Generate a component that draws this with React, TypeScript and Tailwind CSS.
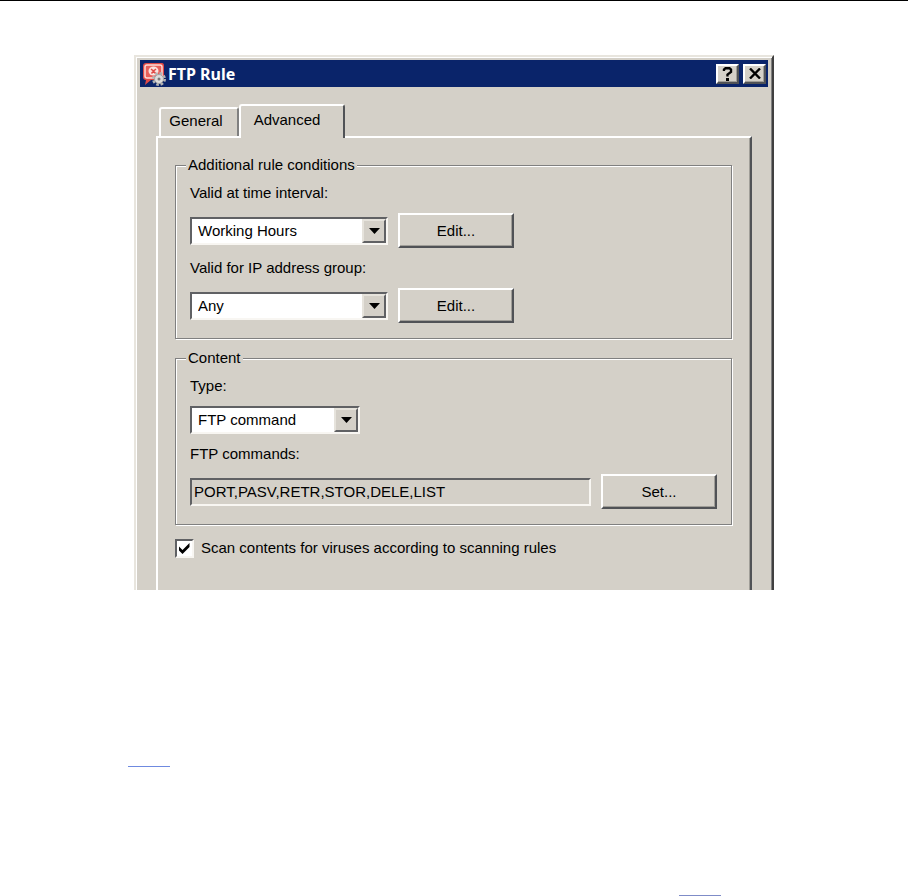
import type { ReactNode } from "react";

const raised =
  "border-2 border-t-white border-l-white border-r-[#505256] border-b-[#505256] shadow-[inset_-1px_-1px_0_#a09e98]";
const sunken =
  "border-2 border-t-[#606164] border-l-[#606164] border-r-[#f8f6f2] border-b-[#f8f6f2]";

function RuleIcon() {
  return (
    <svg width="24" height="24" viewBox="0 0 24 24" aria-hidden="true">
      <path d="M4 1h16q2 0 2 3v11q0 3-3 3H9l-6 5 1-5q-3 0-3-3V4q0-3 3-3z" fill="#e04a46" />
      <rect x="3" y="3" width="17" height="13" rx="2" fill="#e8605a" stroke="#fbdcd8" strokeWidth="1.500" />
      <ellipse cx="11.500" cy="9" rx="5" ry="4.500" fill="#fbe3df" />
      <path d="M9 7l2.500 2L14 7M9.500 11.500L11.500 9l2 2.500" stroke="#e04a46" strokeWidth="1.500" fill="none" />
      <circle cx="17" cy="17" r="5" fill="none" stroke="#b4b4b4" strokeWidth="4" strokeDasharray="2.3 1.6" />
      <circle cx="17" cy="17" r="4.500" fill="#dcdcdc" stroke="#a4a4a4" />
      <circle cx="17" cy="17" r="1.500" fill="#777" />
    </svg>
  );
}

function TitleButton({ label, children }: { label: string; children: ReactNode }) {
  return (
    <button
      type="button"
      aria-label={label}
      className={`flex h-5 w-[23px] items-center justify-center bg-[#d4d0c8] text-black ${raised}`}
    >
      {children}
    </button>
  );
}

function PushButton({ children }: { children: ReactNode }) {
  return (
    <button type="button" className={`h-[35px] w-[116px] shrink-0 bg-[#d4d0c8] ${raised}`}>
      {children}
    </button>
  );
}

function Combo({ id, options, width }: { id: string; options: string[]; width: string }) {
  return (
    <div className={`relative h-7 bg-white ${width} ${sunken}`}>
      <select id={id} className="block h-full w-full appearance-none bg-transparent pr-6 pl-1.5 outline-none">
        {options.map((o) => (
          <option key={o}>{o}</option>
        ))}
      </select>
      {/* Drop-down arrow */}
      <span className="pointer-events-none absolute inset-y-0 right-0 flex w-6 items-center justify-center border-2 border-t-[#e6e3dc] border-r-[#606164] border-b-[#606164] border-l-[#e6e3dc] bg-[#d4d0c8]">
        <svg width="11" height="6" viewBox="0 0 11 6" aria-hidden="true">
          <path d="M0 0h11L5.500 6z" fill="#000" />
        </svg>
      </span>
    </div>
  );
}

function Group({ title, children }: { title: string; children: ReactNode }) {
  return (
    <fieldset className="min-w-0 border border-[#808080] px-[14px] pb-[15px] shadow-[1px_1px_0_#fff,inset_1px_1px_0_#fff]">
      <legend className="-ml-1 bg-[#d4d0c8] px-0.5">{title}</legend>
      <div className="flex flex-col gap-2.5 pt-2">{children}</div>
    </fieldset>
  );
}

export default function App() {
  return (
    <main className="border-t border-black bg-white pt-[54px] font-['Liberation_Sans',Arial,sans-serif] text-[15px] leading-5 text-black">
      <section className="mx-auto w-full max-w-[640px] border-2 border-b-0 border-t-[#e8e5de] border-l-[#e8e5de] border-r-[#404040] bg-[#d4d0c8] shadow-[inset_1px_1px_0_#fff,inset_-1px_0_0_#808080]">
        <div className="px-1 pt-[3px]">
          <header className="flex h-[27px] items-center gap-0.5 bg-[#0a246a] px-0.5 text-white">
            <RuleIcon />
            <h1 className="flex-1 font-['Noto_Sans',sans-serif] text-[16px] font-bold">FTP Rule</h1>
            <div className="flex gap-1">
              <TitleButton label="Help">
                <svg width="11" height="14" viewBox="0 0 11 14" aria-hidden="true">
                  <path d="M2 4V2.500L3.500 1.200h4L9 2.500V5L5.500 7.500V9.500" fill="none" stroke="#000" strokeWidth="2.400" />
                  <path d="M4 11h3v3H4z" />
                </svg>
              </TitleButton>
              <TitleButton label="Close">
                <svg width="12" height="11" viewBox="0 0 12 11" aria-hidden="true">
                  <path d="M1 0.500l10 10M11 0.500l-10 10" stroke="#000" strokeWidth="2.400" />
                </svg>
              </TitleButton>
            </div>
          </header>
        </div>

        <div className="px-5 pt-[17px]">
          {/* Tabs */}
          <div role="tablist" className="flex items-end pl-[3px]">
            <button
              type="button"
              role="tab"
              aria-selected="false"
              className="h-[29px] w-20 rounded-t-[3px] border-2 border-b-0 border-t-white border-l-white border-r-[#808080] pr-1.5 pb-1"
            >
              General
            </button>
            <button
              type="button"
              role="tab"
              aria-selected="true"
              className="relative -mb-0.5 h-[34px] w-[106px] rounded-t-[3px] border-2 border-b-0 border-t-white border-l-white border-r-[#505256] bg-[#d4d0c8] pr-2.5 pb-1"
            >
              Advanced
            </button>
          </div>

          <div
            role="tabpanel"
            className="flex flex-col gap-[9px] border-2 border-b-0 border-t-white border-l-white border-r-[#505256] pt-[17px] pr-[18px] pb-8 pl-[17px] shadow-[inset_-1px_0_0_#a09e98]"
          >
            <Group title="Additional rule conditions">
              <label htmlFor="interval">Valid at time interval:</label>
              <div className="flex items-center gap-2.5">
                <Combo id="interval" options={["Working Hours", "Any"]} width="w-[198px]" />
                <PushButton>Edit...</PushButton>
              </div>
              <label htmlFor="group">Valid for IP address group:</label>
              <div className="flex items-center gap-2.5">
                <Combo id="group" options={["Any"]} width="w-[198px]" />
                <PushButton>Edit...</PushButton>
              </div>
            </Group>

            <Group title="Content">
              <label htmlFor="type">Type:</label>
              <Combo id="type" options={["FTP command"]} width="w-[170px]" />
              <label htmlFor="commands">FTP commands:</label>
              <div className="flex items-center gap-2.5">
                <input
                  id="commands"
                  readOnly
                  defaultValue="PORT,PASV,RETR,STOR,DELE,LIST"
                  className={`h-7 min-w-0 flex-1 bg-[#d4d0c8] px-0.5 outline-none ${sunken}`}
                />
                <PushButton>Set...</PushButton>
              </div>
            </Group>

            <label className="flex items-center gap-[7px] pt-1">
              <span className="relative flex">
                <input
                  type="checkbox"
                  defaultChecked
                  className={`peer h-[19px] w-[19px] appearance-none bg-white ${sunken}`}
                />
                <svg
                  width="19"
                  height="19"
                  viewBox="0 0 19 19"
                  aria-hidden="true"
                  className="pointer-events-none absolute inset-0 hidden peer-checked:block"
                >
                  <path d="M4 7.500v4l3.500 3.500 7-7V4L7.500 11z" fill="#000" />
                </svg>
              </span>
              Scan contents for viruses according to scanning rules
            </label>
          </div>
        </div>
      </section>

      {/* Cross-reference rules */}
      <div className="pt-44 pl-32">
        <div className="w-[42px] border-t border-[#6f8ae0]" />
      </div>
      <div className="flex justify-end pt-32 pr-[187px]">
        <div className="w-[42px] border-t border-[#7f8cc8]" />
      </div>
    </main>
  );
}
